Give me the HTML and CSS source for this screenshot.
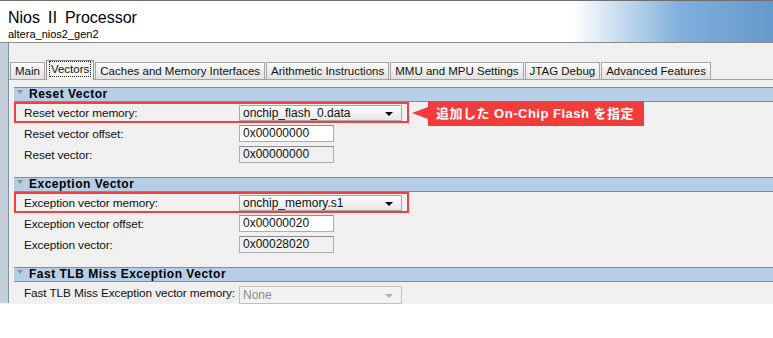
FILE: index.html
```html
<!DOCTYPE html>
<html lang="ja">
<head>
    <meta charset="UTF-8">
    <title>Nios II Processor - Vectors</title>
    <link rel="stylesheet" href="styles.css">
</head>
<body>
    <div class="window">
        <!-- Component header -->
        <div class="header">
            <div class="title">Nios Ⅱ Processor</div>
            <div class="subtitle">altera_nios2_gen2</div>
        </div>

        <div class="body">
            <div class="strip"></div>
            <div class="main">
                <!-- Tabs -->
                <div class="tabs">
                    <div class="tab">Main</div>
                    <div class="tab active"><span class="focus">Vectors</span></div>
                    <div class="tab">Caches and Memory Interfaces</div>
                    <div class="tab">Arithmetic Instructions</div>
                    <div class="tab">MMU and MPU Settings</div>
                    <div class="tab">JTAG Debug</div>
                    <div class="tab">Advanced Features</div>
                </div>

                <div class="panel">
                    <!-- Reset Vector -->
                    <div class="section">
                        <div class="band"><span class="caret"></span>Reset Vector</div>
                        <div class="row hl">
                            <span class="label">Reset vector memory:</span>
                            <div class="select"><span>onchip_flash_0.data</span><span class="arrow"></span></div>
                            <div class="callout">追加した On-Chip Flash を指定</div>
                        </div>
                        <div class="row">
                            <span class="label">Reset vector offset:</span>
                            <div class="field">0x00000000</div>
                        </div>
                        <div class="row">
                            <span class="label">Reset vector:</span>
                            <div class="field readonly">0x00000000</div>
                        </div>
                    </div>

                    <!-- Exception Vector -->
                    <div class="section">
                        <div class="band"><span class="caret"></span>Exception Vector</div>
                        <div class="row hl">
                            <span class="label">Exception vector memory:</span>
                            <div class="select"><span>onchip_memory.s1</span><span class="arrow"></span></div>
                        </div>
                        <div class="row">
                            <span class="label">Exception vector offset:</span>
                            <div class="field">0x00000020</div>
                        </div>
                        <div class="row">
                            <span class="label">Exception vector:</span>
                            <div class="field readonly">0x00028020</div>
                        </div>
                    </div>

                    <!-- Fast TLB Miss Exception Vector -->
                    <div class="section">
                        <div class="band"><span class="caret"></span>Fast TLB Miss Exception Vector</div>
                        <div class="row">
                            <span class="label">Fast TLB Miss Exception vector memory:</span>
                            <div class="select disabled"><span>None</span><span class="arrow"></span></div>
                        </div>
                    </div>
                </div>
            </div>
        </div>
    </div>
</body>
</html>
```

FILE: styles.css
```css
/* General page settings */
body {
    margin: 0;
    background: #fff;
    font-family: "Liberation Sans", "Noto Sans CJK JP", sans-serif;
    font-size: 12px;
    color: #111;
}

/* Outer window, cut off at the bottom */
.window {
    height: 303px;
    overflow: hidden;
    background: #f0f0f0;
    border-top: 1px solid #6f6f6f;
}

/* Header with title */
.header {
    height: 42px;
    box-sizing: border-box;
    padding: 7px 8px 0;
    border-bottom: 1px solid #8a8a8a;
    background: linear-gradient(to right, #fff 0%, #fff 74%, #80afdc 88%, #6699cc 100%);
}

.title {
    font-size: 16px;
    line-height: 20px;
    color: #000;
}

.subtitle {
    font-size: 11px;
    line-height: 12px;
    color: #000;
}

/* Body: left strip + main area */
.body {
    display: flex;
    height: 260px;
}

.strip {
    width: 8px;
    background: #c5cfda;
    border-right: 1px solid #8090a2;
}

.main {
    flex: 1;
    padding-top: 16px;
}

/* Tabs */
.tabs {
    display: flex;
    align-items: flex-end;
    gap: 1px;
    height: 20px;
    padding-left: 1px;
    border-bottom: 1px solid #9aa4ae;
}

.tab {
    height: 16px;
    line-height: 16px;
    padding: 0 4px;
    border: 1px solid #a4a4a4;
    border-bottom: none;
    background: linear-gradient(to bottom, #fbfbfb, #e2e2e2);
    white-space: nowrap;
    font-size: 11.5px;
}

.tab.active {
    height: 19px;
    line-height: 17px;
    margin-bottom: -1px;
    padding: 0 2px;
    background: #f4f4f4;
    border-color: #8e8e8e;
}

.tab .focus {
    display: inline-block;
    line-height: 14px;
    padding: 0 1px;
    border: 1px dotted #222;
}

/* Tab content */
.panel {
    margin-left: 5px;
    padding-top: 7px;
}

.section {
    padding-bottom: 12px;
}

.band {
    height: 13px;
    line-height: 13px;
    border-top: 1px solid #8a8a8a;
    border-bottom: 1px solid #8a8a8a;
    background: #b7cfe6;
    font-weight: bold;
    font-size: 12px;
    letter-spacing: 0.5px;
    padding-left: 3px;
    color: #000;
}

.caret {
    display: inline-block;
    width: 0;
    height: 0;
    border-left: 3px solid transparent;
    border-right: 3px solid transparent;
    border-top: 4px solid #8f8f8f;
    margin-right: 6px;
    vertical-align: 4px;
}

/* Form rows */
.row {
    position: relative;
    display: flex;
    align-items: center;
    width: 395px;
    height: 21px;
    box-sizing: border-box;
    padding-left: 8px;
    border: 2px solid transparent;
}

.row.hl {
    border-color: #f0403f;
}

.label {
    width: 215px;
    flex-shrink: 0;
    white-space: nowrap;
    font-size: 11.8px;
    letter-spacing: -0.1px;
}

.select {
    display: flex;
    align-items: center;
    justify-content: space-between;
    width: 163px;
    height: 16px;
    box-sizing: border-box;
    padding: 0 8px 0 3px;
    border: 1px solid #a8a8a8;
    background: linear-gradient(to bottom, #ffffff, #e6e6e6);
}

.arrow {
    width: 0;
    height: 0;
    border-left: 4px solid transparent;
    border-right: 4px solid transparent;
    border-top: 4px solid #000;
    margin-top: 2px;
}

.select.disabled {
    color: #8a8a8a;
    background: #f2f2f2;
    border-color: #c0c0c0;
    height: 18px;
    margin-top: 4px;
}

.select.disabled .arrow {
    border-top-color: #b0b0b0;
}

.field {
    width: 95px;
    height: 17px;
    line-height: 15px;
    box-sizing: border-box;
    padding-left: 3px;
    border: 1px solid #acacac;
    border-top-color: #8c8c8c;
    background: #fff;
}

.field.readonly {
    background: #f0f0f0;
}

/* Red annotation */
.callout {
    position: absolute;
    left: calc(100% + 21px);
    top: -3px;
    height: 25px;
    line-height: 25px;
    padding: 0 10px 0 8px;
    background: #f23c3c;
    color: #fff;
    font-weight: bold;
    font-size: 13px;
    letter-spacing: 0.5px;
    white-space: nowrap;
}

.callout::before {
    content: "";
    position: absolute;
    left: -16px;
    top: 6px;
    border-top: 6px solid transparent;
    border-bottom: 6px solid transparent;
    border-right: 16px solid #f23c3c;
}
```
